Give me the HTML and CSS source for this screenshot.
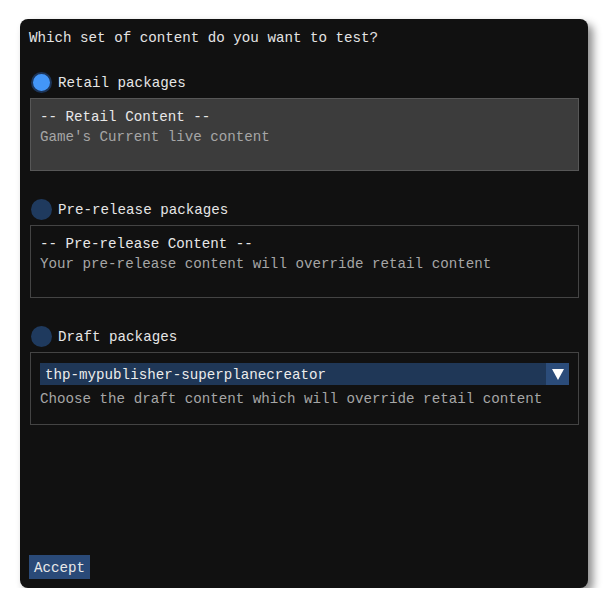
FILE: index.html
```html
<!DOCTYPE html>
<html>
<head>
<meta charset="utf-8">
<link rel="stylesheet" href="styles.css">
</head>
<body>
<div class="window">
  <div class="title">Which set of content do you want to test?</div>

  <div class="radio-row first">
    <span class="radio selected"></span>
    <span class="label">Retail packages</span>
  </div>
  <div class="panel active">
    <div class="line head">-- Retail Content --</div>
    <div class="line dim">Game's Current live content</div>
  </div>

  <div class="radio-row">
    <span class="radio"></span>
    <span class="label">Pre-release packages</span>
  </div>
  <div class="panel">
    <div class="line head">-- Pre-release Content --</div>
    <div class="line dim">Your pre-release content will override retail content</div>
  </div>

  <div class="radio-row">
    <span class="radio"></span>
    <span class="label">Draft packages</span>
  </div>
  <div class="panel draft">
    <div class="combo">
      <span class="combo-text">thp-mypublisher-superplanecreator</span>
      <span class="combo-btn"><svg width="12" height="11" viewBox="0 0 12 11"><polygon points="0,0 12,0 6,11" fill="#ffffff"/></svg></span>
    </div>
    <div class="line dim after-combo">Choose the draft content which will override retail content</div>
  </div>

  <div class="footer">
    <span class="button">Accept</span>
  </div>
</div>
</body>
</html>
```

FILE: styles.css
```css
html, body {
  margin: 0;
  padding: 0;
  background: #ffffff;
}
body {
  padding: 19px 0 0 20px;
  font-family: "Liberation Mono", "DejaVu Sans Mono", monospace;
  font-size: 14.2px;
}
.window {
  box-sizing: border-box;
  width: 568px;
  height: 569px;
  background: #111111;
  border-radius: 8px;
  box-shadow: 5px 5px 8px rgba(0, 0, 0, 0.45);
  padding: 9px 9px 9px 9px;
  display: flex;
  flex-direction: column;
  color: #dcdcdc;
}
.title {
  line-height: 18px;
  padding-top: 1px;
  color: #e4e4e4;
}
.radio-row {
  display: flex;
  align-items: center;
  height: 21px;
  margin-top: 28px;
  margin-left: 2px;
}
.radio-row.first {
  margin-top: 25px;
}
.radio {
  box-sizing: border-box;
  width: 21px;
  height: 21px;
  border-radius: 50%;
  background: #1f3a5e;
  flex: 0 0 auto;
}
.radio.selected {
  background: #4396f8;
  border: 2px solid #1c355a;
}
.label {
  margin-left: 6px;
  color: #e6e6e6;
  line-height: 18px;
}
.panel {
  box-sizing: border-box;
  margin-top: 5px;
  margin-left: 1px;
  height: 73px;
  border: 1px solid #444444;
  padding: 8px 9px 0 9px;
  background: #111111;
}
.panel.active {
  background: #3c3c3c;
  border-color: #575757;
}
.line {
  line-height: 20px;
  white-space: nowrap;
}
.head {
  color: #e8e8e8;
}
.dim {
  color: #a6a6a6;
}
.panel.draft {
  padding-top: 10px;
}
.combo {
  display: flex;
  height: 22px;
  background: #1f3757;
  align-items: center;
}
.combo-text {
  flex: 1 1 auto;
  padding-left: 5px;
  color: #ececec;
  line-height: 22px;
  padding-top: 2px;
}
.combo-btn {
  width: 23px;
  height: 22px;
  background: #2b4c7a;
  display: flex;
  align-items: center;
  justify-content: center;
}
.combo-btn svg {
  display: block;
}
.after-combo {
  margin-top: 4px;
}
.footer {
  margin-top: auto;
}
.button {
  display: inline-block;
  background: #2a4a78;
  color: #e8e8e8;
  line-height: 24px;
  height: 24px;
  padding: 0 5px;
  padding-top: 1px;
  box-sizing: border-box;
}
```
